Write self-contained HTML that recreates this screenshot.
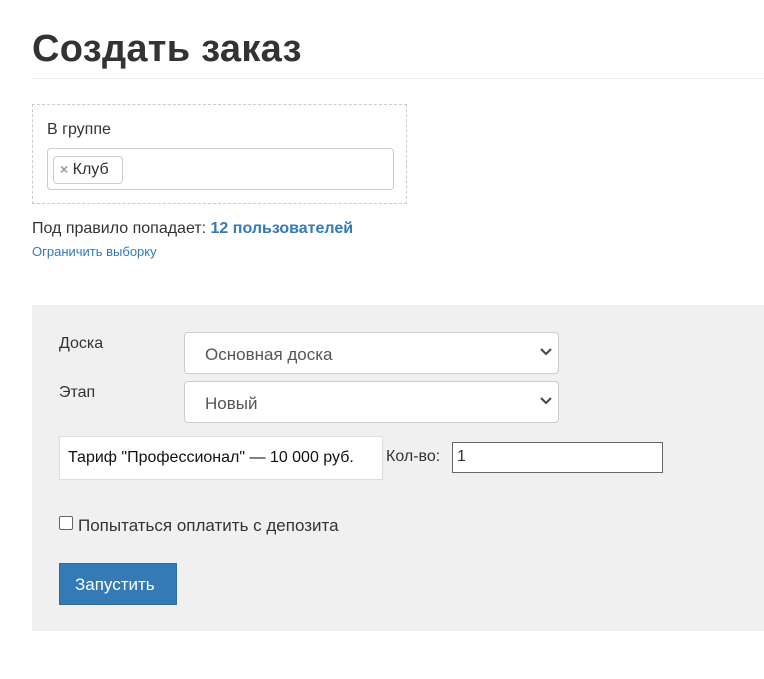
<!DOCTYPE html>
<html><head><meta charset="utf-8"><style>
*{box-sizing:border-box;margin:0;padding:0}
body{width:764px;height:679px;background:#fff;font-family:"Liberation Sans",sans-serif;color:#333;position:relative;overflow:hidden}
.a{position:absolute}
h1{position:absolute;left:32px;top:28px;font-size:38px;font-weight:bold;color:#333;letter-spacing:0.3px}
.sel{position:absolute;left:184px;width:375px;height:42px;background:#fff;border:1px solid #ccc;border-radius:4px;font-size:17px;color:#555;padding:12px 0 0 20px}
.sel svg{position:absolute;right:6px;top:15px}
</style></head><body>
<h1>Создать заказ</h1>
<div class="a" style="left:32px;top:78px;width:732px;height:1px;background:#eee"></div>
<div class="a" style="left:32px;top:104px;width:375px;height:100px;border:1px dashed #ccc"></div>
<div class="a" style="left:47px;top:121px;font-size:16px">В группе</div>
<div class="a" style="left:47px;top:148px;width:347px;height:42px;border:1px solid #ccc;border-radius:4px;background:#fff"></div>
<div class="a" style="left:53px;top:156px;width:70px;height:28px;border:1px solid #ccc;border-radius:4px;background:#fff;font-size:16px;padding:4px 0 0 6px"><span style="color:#999;font-weight:bold;font-size:14px">×</span> Клуб</div>
<div class="a" style="left:32px;top:220px;font-size:16px">Под правило попадает: <b style="color:#337ab7">12 пользователей</b></div>
<div class="a" style="left:32px;top:244px;font-size:13px;color:#337ab7">Ограничить выборку</div>
<div class="a" style="left:32px;top:305px;width:732px;height:326px;background:#f0f0f0"></div>
<div class="a" style="left:59px;top:335px;font-size:16px">Доска</div>
<div class="a" style="left:59px;top:384px;font-size:16px">Этап</div>
<div class="sel" style="top:332px">Основная доска<svg width="12" height="8" viewBox="0 0 12 8"><path d="M1 1l5 5 5-5" stroke="#444" stroke-width="2" fill="none"/></svg></div>
<div class="sel" style="top:381px">Новый<svg width="12" height="8" viewBox="0 0 12 8"><path d="M1 1l5 5 5-5" stroke="#444" stroke-width="2" fill="none"/></svg></div>
<div class="a" style="left:59px;top:436px;width:324px;height:44px;background:#fff;border:1px solid #ddd;font-size:16px;color:#111;padding:12px 0 0 8px;white-space:nowrap">Тариф "Профессионал" — 10 000 руб.</div>
<div class="a" style="left:386px;top:448px;font-size:16px">Кол-во:</div>
<div class="a" style="left:452px;top:442px;width:211px;height:31px;background:#fff;border:1px solid #666;font-size:16px;padding:5px 0 0 4px">1</div>
<div class="a" style="left:59px;top:516px;width:14px;height:14px;border:1px solid #666;border-radius:2px;background:#fff"></div>
<div class="a" style="left:78px;top:516px;font-size:17px">Попытаться оплатить с депозита</div>
<div class="a" style="left:59px;top:563px;width:118px;height:42px;background:#337ab7;border:1px solid #2e6da4;color:#fff;font-size:17px;padding:11px 0 0 15px">Запустить</div>
</body></html>
